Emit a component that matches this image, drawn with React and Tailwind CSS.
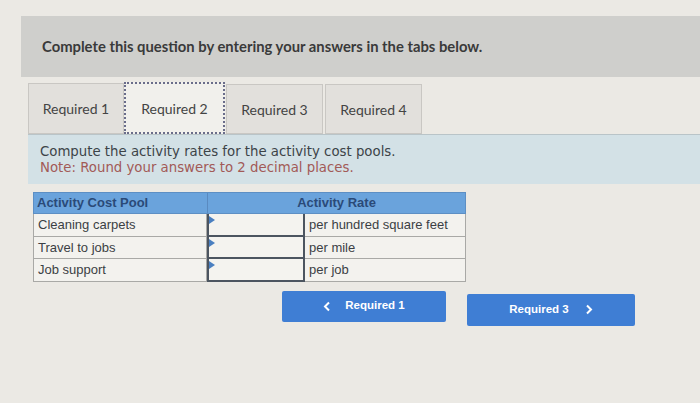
export default function App() {
  const rows = [
    ["Cleaning carpets", "per hundred square feet"],
    ["Travel to jobs", "per mile"],
    ["Job support", "per job"],
  ];
  return (
    <div className="w-[700px] h-[403px] bg-[#ebe9e4] overflow-hidden relative" style={{ fontFamily: "Lato, sans-serif" }}>
      <div className="h-[16px]" />
      <div className="ml-[21px] h-[61px] bg-[#cfcfcc] flex items-center pl-[21px]">
        <span className="text-[14.8px] font-bold text-[#3a3a3a]">Complete this question by entering your answers in the tabs below.</span>
      </div>
      <div className="ml-[28px] mt-[5px] flex items-end h-[52px]">
        <div className="w-[96px] h-[51px] bg-[#e2e0dc] border border-[#c9c7c3] flex items-center justify-center text-[14px] text-[#444]">Required 1</div>
        <div className="w-[101px] h-[52px] bg-[#f1f0ec] border-2 border-dotted border-[#6a6d8a] flex items-center justify-center text-[14px] text-[#444] relative">
          Required 2
        </div>
        <div className="w-[97px] h-[50px] bg-[#e2e0dc] border border-[#c9c7c3] flex items-center justify-center text-[14px] text-[#444] ml-[1px]">Required 3</div>
        <div className="w-[97px] h-[50px] bg-[#e2e0dc] border border-[#c9c7c3] flex items-center justify-center text-[14px] text-[#444] ml-[2px]">Required 4</div>
      </div>
      <div className="ml-[28px] h-[50px] bg-[#d3e1e6] border-t border-[#b9c4c8] pl-[12px] pt-[9px] leading-[16px] text-[13.3px]" style={{ fontFamily: "'DejaVu Sans', sans-serif" }}>
        <div className="text-[#3d4448]">Compute the activity rates for the activity cost pools.</div>
        <div className="text-[#a25a57]">Note: Round your answers to 2 decimal places.</div>
      </div>
      <div className="ml-[33px] mt-[8px] w-[433px] text-[13px] text-[#3b3f44]" style={{ fontFamily: "'Liberation Sans', Arial, sans-serif" }}>
        <div className="flex h-[22px] bg-[#6aa3dc] border border-[#5d8fc4] font-bold text-[#2a4a78]">
          <div className="w-[174px] pl-[3px] flex items-center border-r border-[#5a8ac0]">Activity Cost Pool</div>
          <div className="flex-1 flex items-center justify-center">Activity Rate</div>
        </div>
        {rows.map(([a, b]) => (
          <div key={a} className="flex h-[22.5px] bg-[#f3f2ee]">
            <div className="w-[174px] pl-[4px] flex items-center border border-t-0 border-[#a9a9a6]">{a}</div>
            <div className="w-[98px] relative border-2 border-t-0 border-[#4c5560] bg-[#f4f3ef]">
              <div className="absolute left-[0px] top-[2px] w-0 h-0 border-y-[4px] border-y-transparent border-l-[6px] border-l-[#4a7fc0]" />
            </div>
            <div className="flex-1 pl-[4px] flex items-center border border-t-0 border-l-0 border-[#a9a9a6]">{b}</div>
          </div>
        ))}
      </div>
      <div className="flex mt-[9px]" style={{ fontFamily: "'Liberation Sans', Arial, sans-serif" }}>
        <div className="ml-[282px] w-[164px] h-[31px] bg-[#3f7ed4] rounded-[2px] flex items-center justify-center gap-[14px] text-white text-[11.5px] font-bold">
          <svg width="8" height="11" viewBox="0 0 8 11"><path d="M6 1.5 L2 5.5 L6 9.5" stroke="white" strokeWidth="2" fill="none" /></svg>
          <span>Required 1</span>
        </div>
        <div className="ml-[21px] mt-[3px] w-[168px] h-[32px] bg-[#3f7ed4] rounded-[2px] flex items-center justify-center gap-[16px] text-white text-[11.5px] font-bold">
          <span>Required 3</span>
          <svg width="8" height="11" viewBox="0 0 8 11"><path d="M2 1.5 L6 5.5 L2 9.5" stroke="white" strokeWidth="2" fill="none" /></svg>
        </div>
      </div>
    </div>
  );
}
